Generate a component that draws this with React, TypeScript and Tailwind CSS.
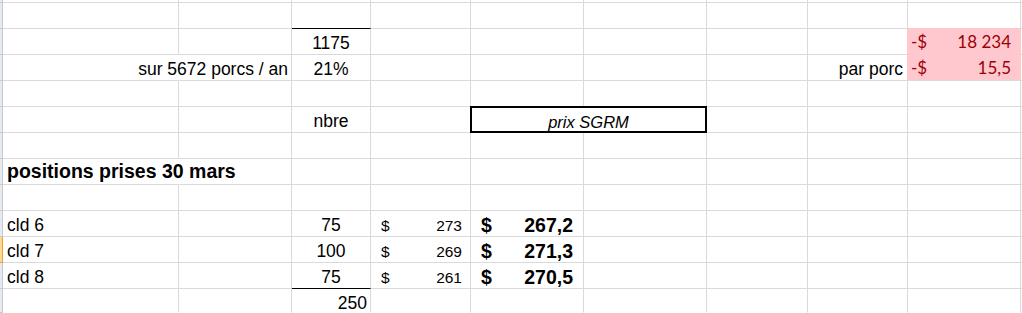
import React from "react";

type CellSpec = { cls?: string; v?: React.ReactNode };

function Row({
  cells = {},
  skip = [],
  active = false,
  last = false,
}: {
  cells?: Record<number, CellSpec>;
  skip?: number[];
  active?: boolean;
  last?: boolean;
}) {
  const out: React.ReactNode[] = [];
  out.push(
    <div
      key="h"
      className={
        active
          ? "border-r border-b border-[#e4a23c] bg-[#fcd98c]"
          : "border-r border-b border-[#c4cad3] bg-[#e7eaee]"
      }
    />
  );
  for (let i = 1; i <= 10; i++) {
    if (skip.includes(i)) continue;
    const c = cells[i];
    out.push(
      <div
        key={i}
        className={`border-r border-b border-[#dadada] whitespace-nowrap ${i === 10 ? "border-r-0" : ""} ${
          last ? "border-b-transparent" : ""
        } ${c?.cls ?? ""}`}
      >
        {c?.v}
      </div>
    );
  }
  return <>{out}</>;
}

const label = "pl-[4px] pt-[4px]";
const center = "flex justify-center pt-[4px]";
const small = "flex justify-between pl-[10px] pr-[8px] pt-[5px] text-[15.5px]";
const bold = "flex justify-between pl-[10px] pr-[10px] pt-[4px] font-bold text-[19.5px]";

function Acct({ cls, n }: { cls: string; n: string }) {
  return { cls, v: <><span>$</span><span>{n}</span></> };
}

export default function App() {
  const lines = [
    { name: "cld 6", qty: "75", p: "273", s: "267,2" },
    { name: "cld 7", qty: "100", p: "269", s: "271,3" },
    { name: "cld 8", qty: "75", p: "261", s: "270,5" },
  ];

  return (
    <div className="w-[1022px] h-[313px] overflow-hidden bg-white font-['Liberation_Sans',Arial,sans-serif] text-[17.5px] leading-[20px] text-black">
      <div className="grid grid-cols-[3px_176px_113px_79px_100px_113px_123px_101px_100px_113px_1fr] grid-rows-[3px_repeat(11,26px)_24px]">
        <Row />
        <Row cells={{ 3: { cls: "border-b-black" } }} />
        <Row cells={{ 3: { cls: center, v: "1175" } }} skip={[9]} />
        <Row
          cells={{
            1: { cls: "border-r-transparent" },
            2: { cls: "flex justify-end pr-[3px] pt-[4px]", v: "sur 5672 porcs / an" },
            3: { cls: center, v: "21%" },
            8: { cls: "flex justify-end pr-[4px] pt-[4px]", v: "par porc" },
          }}
          skip={[9]}
        />
        <Row />
        <Row cells={{ 3: { cls: center, v: "nbre" } }} skip={[5, 6]} />
        <Row />
        <Row
          cells={{
            1: {
              cls: "border-r-transparent pl-[4px] pt-[2px] font-bold text-[19.5px]",
              v: "positions prises 30 mars",
            },
          }}
        />
        <Row />
        {lines.map((l, i) => (
          <Row
            key={l.name}
            active={i === 1}
            cells={{
              1: { cls: label, v: l.name },
              3: { cls: `${center} ${i === 2 ? "border-b-black" : ""}`, v: l.qty },
              4: Acct({ cls: small, n: l.p }),
              5: Acct({ cls: bold, n: l.s }),
            }}
          />
        ))}
        <Row last cells={{ 3: { cls: "flex justify-end pr-[3px] pt-[4px]", v: "250" } }} />

        <div className="col-start-10 row-start-3 row-span-2 -mt-px -ml-px border-b border-[#dadada] bg-[#ffc7ce] text-[#9c0006] font-['Lato',sans-serif] text-[17px] flex flex-col">
          <div className="h-[26px] flex justify-between pl-[4px] pr-[10px] pt-[4px]">
            <span>-$</span>
            <span>18 234</span>
          </div>
          <div className="h-[26px] flex justify-between pl-[4px] pr-[10px] pt-[4px]">
            <span>-$</span>
            <span>15,5</span>
          </div>
        </div>
        <div className="col-start-6 col-span-2 row-start-6 -mt-px -ml-px border-2 border-black flex justify-center pt-[4px] italic text-[16.5px]">
          prix SGRM
        </div>
      </div>
    </div>
  );
}
